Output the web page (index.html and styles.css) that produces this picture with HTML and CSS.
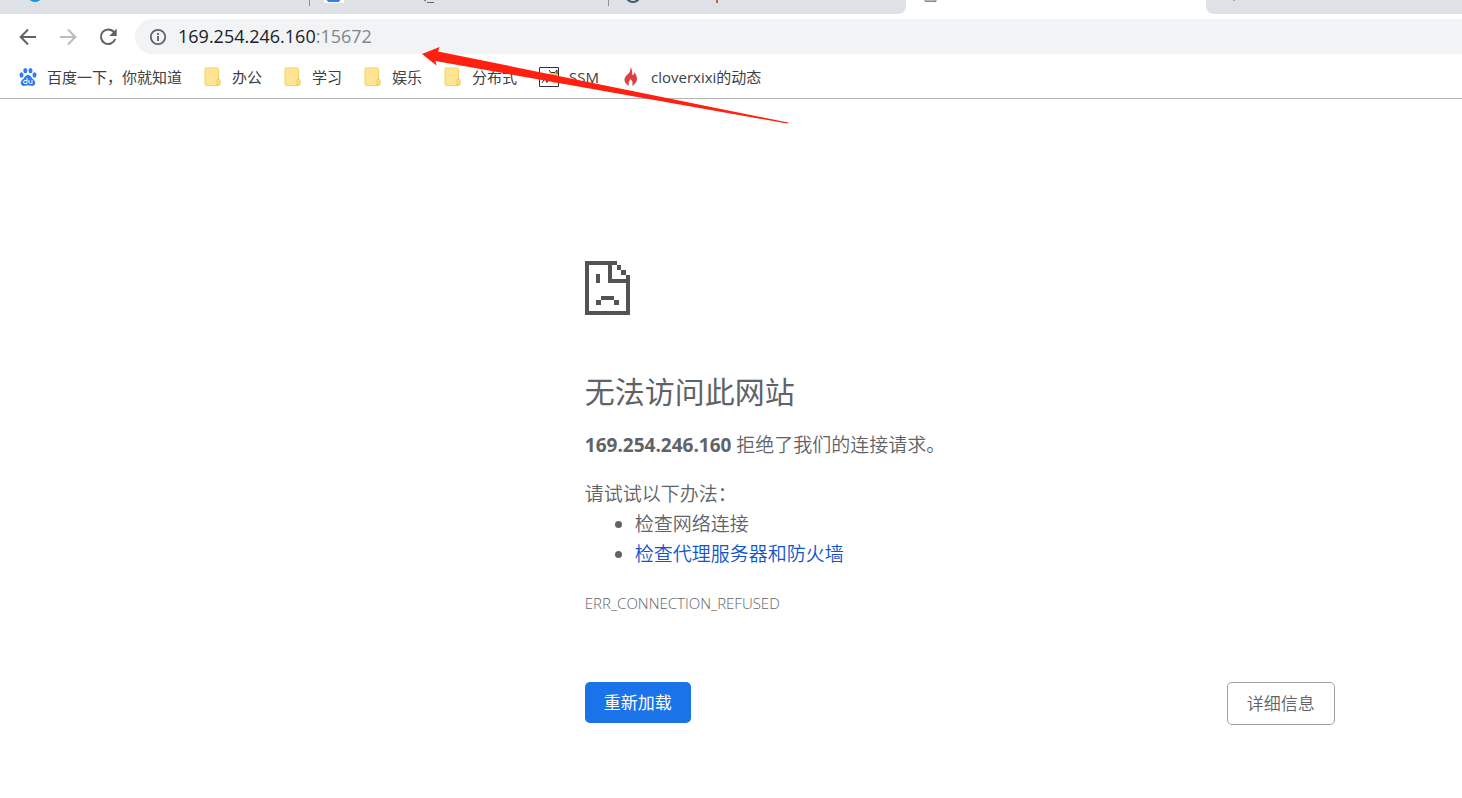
FILE: index.html
```html
<!DOCTYPE html>
<html lang="zh-CN">
<head>
<meta charset="utf-8">
<title>169.254.246.160</title>
<link rel="stylesheet" href="styles.css">
</head>
<body>
<header class="browser">
  <div class="tabs">
    <div class="tabs-before">
      <div class="tab"><svg class="tab-icon" width="20" height="14" viewBox="0 0 20 14"><circle cx="10" cy="-6" r="8" fill="#1296db"/></svg></div>
      <div class="tab"><svg class="tab-icon" width="120" height="14" viewBox="0 0 120 14"><path d="M0 0h20v3H0z" fill="#fff"/><path d="M3 0h13q0 2-3 2H6Q3 2 3 0z" fill="#2f7cf6"/><path d="M100 0l2 1M103 2.500h7" stroke="#5f6368" fill="none"/></svg></div>
      <div class="tab"><svg class="tab-icon" width="120" height="14" viewBox="0 0 120 14"><circle cx="10" cy="-5" r="7" fill="none" stroke="#3c5a6e" stroke-width="2"/><path d="M94 0v3" stroke="#b06a50" stroke-width="2"/></svg></div>
    </div>
    <div class="tab-active"><svg width="14" height="14" viewBox="0 0 14 14"><path d="M1 0v1.500h11V0" fill="#bbb" stroke="#888"/></svg></div>
    <div class="tabs-after"><svg width="4" height="2" viewBox="0 0 4 2"><path d="M1 0h2v1H1z" fill="#a5a8ad"/></svg></div>
  </div>
  <div class="toolbar">
    <button class="nav" aria-label="后退"><svg width="20" height="20" viewBox="0 0 20 20"><path d="M18 10H3M10 2.500L2.700 10l7.300 7.500" fill="none" stroke="#5f6368" stroke-width="2"/></svg></button>
    <button class="nav" aria-label="前进"><svg width="20" height="20" viewBox="0 0 20 20"><path d="M2 10h15M10 2.500l7.300 7.500-7.300 7.500" fill="none" stroke="#babcbe" stroke-width="2"/></svg></button>
    <button class="nav" aria-label="重新加载"><svg width="20" height="20" viewBox="0 0 20 20"><path d="M16 5.200A7.300 7.300 0 1 0 17.200 12" fill="none" stroke="#5f6368" stroke-width="2"/><path d="M18.700 1.500V9h-7.500z" fill="#5f6368"/></svg></button>
    <div class="address">
      <svg width="18" height="18" viewBox="0 0 18 18"><circle cx="9" cy="9" r="7.200" fill="none" stroke="#5f6368" stroke-width="1.800"/><path d="M9 8v5M9 5v2" stroke="#5f6368" stroke-width="1.800"/></svg>
      <div class="url"><span class="host">169.254.246.160</span>:15672</div>
    </div>
  </div>
  <nav class="bookmarks">
    <a href="#"><svg width="18" height="20" viewBox="0 0 18 20"><g fill="#2f7cf6"><ellipse cx="2.500" cy="8" rx="2" ry="2.700"/><ellipse cx="6.300" cy="3.600" rx="2" ry="2.700"/><ellipse cx="11.500" cy="3.600" rx="2" ry="2.700"/><ellipse cx="15.500" cy="8" rx="2" ry="2.700"/><path d="M9 8c2.600 0 3.500 2.700 5.200 4.300 4 3.400 1.500 7.300-2 6.500-2-.5-4.400-.5-6.400 0-3.500.8-6-3.100-2-6.500C5.500 10.700 6.400 8 9 8z"/></g><path d="M8 11v5.500M8 13.500H6q-1.500 0-1.500 1.500T6 16.500h2M10 13v2q0 1.500 1.500 1.500H13V13" fill="none" stroke="#fff"/></svg><span>百度一下，你就知道</span></a>
    <a href="#"><svg width="18" height="20" viewBox="0 0 18 20"><path d="M2 1h11q1.500 0 1.500 1.500V18.500H2.500Q1 18.500 1 17V2q0-1 1-1z" fill="#ffe593" stroke="#f5d25b"/><path d="M13 18.500V13.500q0-1.500 1.500-1.500T16 13.500v3.500q0 1.500-1.500 1.500z" fill="#ffe07a" stroke="#efca4d"/></svg><span>办公</span></a>
    <a href="#"><svg width="18" height="20" viewBox="0 0 18 20"><path d="M2 1h11q1.500 0 1.500 1.500V18.500H2.500Q1 18.500 1 17V2q0-1 1-1z" fill="#ffe593" stroke="#f5d25b"/><path d="M13 18.500V13.500q0-1.500 1.500-1.500T16 13.500v3.500q0 1.500-1.500 1.500z" fill="#ffe07a" stroke="#efca4d"/></svg><span>学习</span></a>
    <a href="#"><svg width="18" height="20" viewBox="0 0 18 20"><path d="M2 1h11q1.500 0 1.500 1.500V18.500H2.500Q1 18.500 1 17V2q0-1 1-1z" fill="#ffe593" stroke="#f5d25b"/><path d="M13 18.500V13.500q0-1.500 1.500-1.500T16 13.500v3.500q0 1.500-1.500 1.500z" fill="#ffe07a" stroke="#efca4d"/></svg><span>娱乐</span></a>
    <a href="#"><svg width="18" height="20" viewBox="0 0 18 20"><path d="M2 1h11q1.500 0 1.500 1.500V18.500H2.500Q1 18.500 1 17V2q0-1 1-1z" fill="#ffe593" stroke="#f5d25b"/><path d="M13 18.500V13.500q0-1.500 1.500-1.500T16 13.500v3.500q0 1.500-1.500 1.500z" fill="#ffe07a" stroke="#efca4d"/></svg><span>分布式</span></a>
    <a href="#"><svg width="20" height="20" viewBox="0 0 20 20"><path d="M.5.500h19v19H.5z" fill="#fff" stroke="#333"/><path d="M10 4l2 1.500h4L18 3l1 4v8l-4 2-4-5z" fill="#e9c77b"/><path d="M10 3l2 2.500h4L18 3v4M2 6l3 5M3 16l3-5 3 4M7 12l1 4M12 9h1M16 9h1" fill="none" stroke="#333"/></svg><span>SSM</span></a>
    <a href="#"><svg width="20" height="20" viewBox="-3 0 20 20"><path d="M6.500 0c2 3 1.500 5 2 8 1 0 2-1 2-3 3 5 4.500 10-2.500 14 1.500-4 0-5-1.500-7-1 3-3 3.500-1 7C-1 16 0 11 2 9c2-2 5-4 4.500-9z" fill="#dc4040"/></svg><span>cloverxixi的动态</span></a>
  </nav>
  <svg class="arrow" width="368" height="80" viewBox="0 0 368 80"><path d="M0 8L17.500 1 16 5.500 366 76.500q1 1-1 1L13.500 15l1 4.500z" fill="#ff2010"/></svg>
</header>
<main class="error-page">
  <svg class="sad-page" width="45" height="54" viewBox="0 0 45 54"><g fill="#535353" shape-rendering="crispEdges"><path d="M0 0h32v4h-5v14h14v-4h4v40H0zM4 4v46h37V22H23V4z" fill-rule="evenodd"/><path d="M32 4h4v5h-4zM36 9h5v5h-5zM11 13h4v9h-4zM16 35h13v4H16zM11 39h5v5h-5zM29 39h5v5h-5z"/></g></svg>
  <h1>无法访问此网站</h1>
  <p class="summary"><strong>169.254.246.160</strong> 拒绝了我们的连接请求。</p>
  <div class="suggestions">
    <p>请试试以下办法：</p>
    <ul>
      <li>检查网络连接</li>
      <li><a href="#">检查代理服务器和防火墙</a></li>
    </ul>
  </div>
  <p class="code">ERR_CONNECTION_REFUSED</p>
  <div class="actions">
    <button class="primary">重新加载</button>
    <button class="secondary">详细信息</button>
  </div>
</main>
</body>
</html>
```
FILE: styles.css
```css
* { box-sizing: border-box; }
body {
  margin: 0;
  background: #fff;
  color: #5f6368;
  font-family: "Open Sans", "Noto Sans CJK SC", sans-serif;
  font-weight: 350;
}
button { font: inherit; cursor: pointer; }
svg { display: block; flex: none; }
h1, p, ul { margin: 0; }

.browser { position: relative; border-bottom: 1px solid #b4b4b6; }
.tabs { display: flex; height: 14px; overflow: hidden; background: #fff; }
.tabs-before {
  display: flex;
  width: 906px;
  padding-left: 11px;
  background: #dee1e6;
  border-bottom-right-radius: 8px;
}
.tab { flex: none; width: 299px; height: 6px; padding-left: 14px; border-right: 1px solid #8d9095; }
.tab:last-child { border-right: 0; }
.tab-active { width: 300px; padding-left: 18px; }
.tabs-after { flex: 1; padding-left: 26px; background: #dee1e6; border-bottom-left-radius: 8px; }

.toolbar { display: flex; align-items: center; padding: 5px 0 0 8px; }
.nav {
  display: grid;
  place-items: center;
  width: 40px;
  height: 34px;
  padding: 0;
  border: 0;
  background: none;
}
.address {
  display: flex;
  flex: 1;
  align-items: center;
  gap: 11px;
  height: 35px;
  margin-left: 7px;
  padding-left: 14px;
  border-radius: 18px 0 0 18px;
  background: #f1f3f4;
}
.url { padding-bottom: 2px; color: #80868b; font-size: 18px; line-height: 24px; font-weight: 400; }
.host { color: #202124; }

.bookmarks {
  display: flex;
  align-items: center;
  gap: 22px;
  height: 44px;
  padding: 2px 0 0 19px;
  font-size: 15px;
  font-weight: 400;
  line-height: 20px;
}
.bookmarks a {
  display: flex;
  align-items: center;
  gap: 10px;
  color: #3c4043;
  text-decoration: none;
  white-space: nowrap;
}
.arrow { position: absolute; left: 422px; top: 46px; }

.error-page { max-width: 750px; margin-left: 40%; padding-top: 162px; font-size: 19px; line-height: 30px; }
.error-page h1 { margin-top: 55px; font-size: 30px; line-height: 44px; font-weight: 400; }
.summary { margin-top: 16px; }
.summary strong { font-weight: 700; }
.suggestions { margin-top: 19px; }
.suggestions ul { padding-left: 50px; }
.suggestions a { color: #1155cc; text-decoration: none; }
.code { margin-top: 19px; font-size: 15px; }
.actions { display: flex; justify-content: space-between; align-items: flex-start; margin-top: 64px; }
.actions button { padding: 8px 19px; border-radius: 5px; font-size: 17px; line-height: 25px; }
.actions .primary { border: 0; background: #1a73e8; color: #fff; font-weight: 400; }
.secondary { border: 1px solid #9aa0a6; background: #fff; color: #5f6368; }
```
